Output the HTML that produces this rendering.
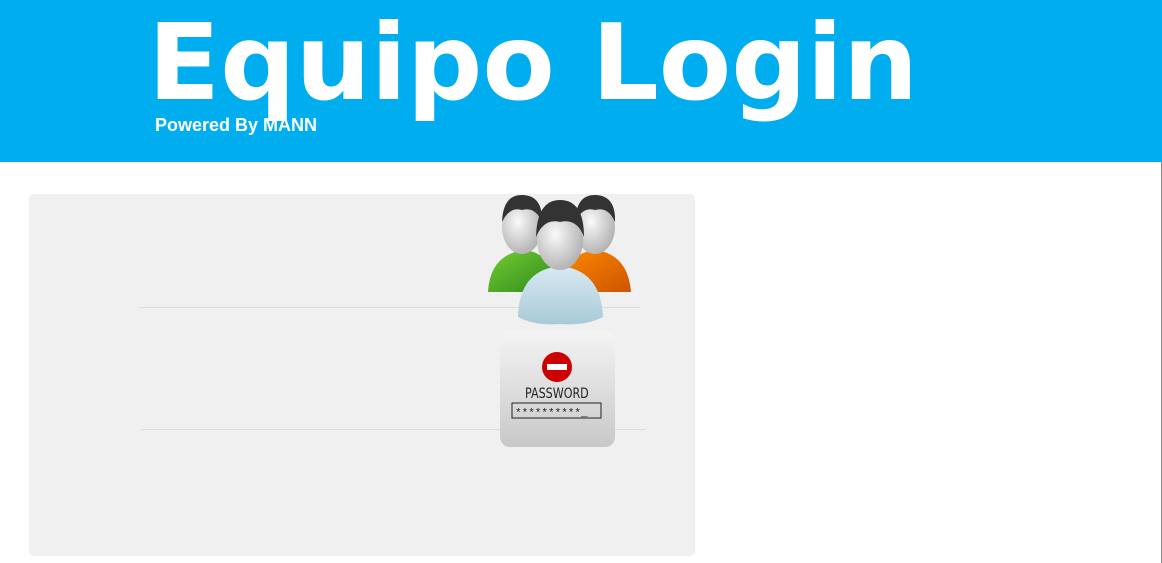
<!DOCTYPE html>
<html><head><style>
body{margin:0;width:1162px;height:563px;overflow:hidden;background:#fff;position:relative;font-family:"Liberation Sans",sans-serif}
#hdr{position:absolute;left:0;top:0;width:1162px;height:162px;background:#00aeef}
#t{position:absolute;left:148px;top:1px;font:bold 105.5px "DejaVu Sans",sans-serif;color:#fff;white-space:nowrap}
#p{position:absolute;left:155px;top:115px;font-weight:bold;font-size:18px;color:#fff}
#edge{position:absolute;left:1161px;top:162px;width:1px;height:401px;background:#888}
#panel{position:absolute;left:29px;top:194px;width:666px;height:362px;background:#f0f0f0;border-radius:5px}
.ln{position:absolute;height:1px;background:#ddd}
</style></head><body>
<div id="hdr"><div id="t">Equipo Login</div><div id="p">Powered By MANN</div></div>
<div id="edge"></div>
<div id="panel"></div>
<div class="ln" style="left:139px;top:307px;width:501px"></div>
<div class="ln" style="left:141px;top:429px;width:505px"></div>
<svg style="position:absolute;left:485px;top:192px" width="150" height="135" viewBox="0 0 150 135">
<defs>
<radialGradient id="hd" cx="0.4" cy="0.4" r="0.7"><stop offset="0" stop-color="#fafafa"/><stop offset="1" stop-color="#aaa"/></radialGradient>
<linearGradient id="g" x1="0" y1="0" x2="1" y2="1"><stop offset="0" stop-color="#7c3"/><stop offset="1" stop-color="#2a8a1a"/></linearGradient>
<linearGradient id="o" x1="0" y1="0" x2="1" y2="1"><stop offset="0" stop-color="#f80"/><stop offset="1" stop-color="#c50"/></linearGradient>
<linearGradient id="b" x1="0" y1="0" x2="0" y2="1"><stop offset="0" stop-color="#d8eaf2"/><stop offset="1" stop-color="#a9c9d8"/></linearGradient>
</defs>
<path d="M3 100 Q5 62 40 58 Q70 62 72 100 Z" fill="url(#g)"/>
<ellipse cx="37" cy="35" rx="20" ry="27" fill="url(#hd)"/>
<path d="M17 30 Q18 2 38 3 Q58 4 57 30 Q50 14 37 18 Q25 14 17 30Z" fill="#333"/>
<path d="M75 100 Q78 62 110 58 Q143 62 146 100 Z" fill="url(#o)"/>
<ellipse cx="110" cy="35" rx="20" ry="27" fill="url(#hd)"/>
<path d="M90 30 Q91 2 111 3 Q131 4 130 30 Q123 14 110 18 Q98 14 90 30Z" fill="#333"/>
<path d="M33 125 Q34 78 75 74 Q116 78 118 125 Q100 134 75 132 Q50 134 33 125Z" fill="url(#b)"/>
<ellipse cx="75" cy="48" rx="23" ry="30" fill="url(#hd)"/>
<path d="M51 45 Q52 8 75 8 Q99 8 99 45 Q92 26 75 30 Q59 26 51 45Z" fill="#333"/>
</svg>
<div style="position:absolute;left:500px;top:331px;width:115px;height:116px;border-radius:10px;background:linear-gradient(#f4f4f4,#c8c8c8)"></div>
<svg style="position:absolute;left:500px;top:331px" width="115" height="116">
<circle cx="57" cy="36" r="15" fill="#c00"/><rect x="47" y="33" width="20" height="6" fill="#fff"/>
<text x="25" y="67" font-family="DejaVu Sans,sans-serif" font-size="14" fill="#222" transform="translate(25 0) scale(0.75 1) translate(-25 0)" textLength="85" lengthAdjust="spacingAndGlyphs">PASSWORD</text>
<rect x="12" y="72" width="89" height="15" fill="none" stroke="#222"/>
<text x="15" y="85" font-family="Liberation Mono,monospace" font-size="11" fill="#222">**********_</text>
</svg>
</body></html>
